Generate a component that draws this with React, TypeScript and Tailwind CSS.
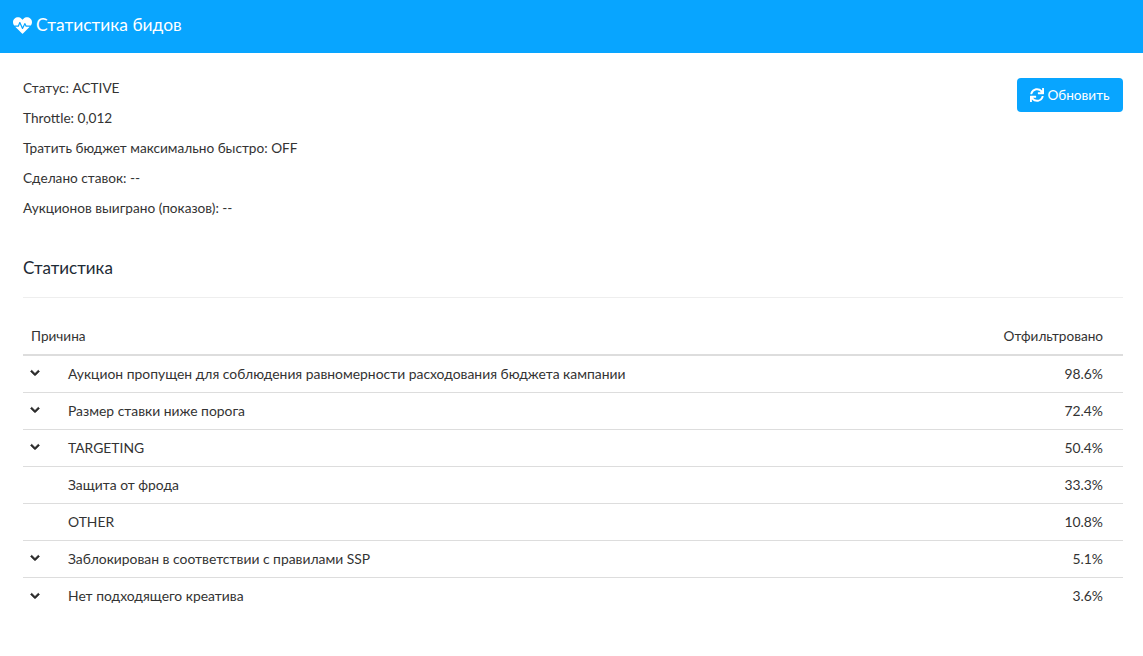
import { FaHeartbeat, FaSync, FaChevronDown } from "react-icons/fa";

const rows: [string, string, boolean][] = [
  ["Аукцион пропущен для соблюдения равномерности расходования бюджета кампании", "98.6%", true],
  ["Размер ставки ниже порога", "72.4%", true],
  ["TARGETING", "50.4%", true],
  ["Защита от фрода", "33.3%", false],
  ["OTHER", "10.8%", false],
  ["Заблокирован в соответствии с правилами SSP", "5.1%", true],
  ["Нет подходящего креатива", "3.6%", true],
];
const info = ["Статус: ACTIVE", "Throttle: 0,012", "Тратить бюджет максимально быстро: OFF", "Сделано ставок: --", "Аукционов выиграно (показов): --"];

export default function App() {
  return (
    <div className="min-h-[656px] bg-white font-['Lato','Noto_Sans',sans-serif] text-[13.88px] text-[#333333]">
      <header className="flex h-[53px] items-center gap-[4px] bg-[#08a5ff] pl-[13px] text-[17.4px] text-white">
        <FaHeartbeat className="h-[19px] w-[19px] -translate-y-[1px]" />
        <span className="-translate-y-[1px]">Статистика бидов</span>
      </header>
      <main className="pl-[23px] pr-[20px] pt-[20px]">
        <div className="flex items-start justify-between">
          <div className="flex flex-col text-[13.65px]">
            {info.map((t) => (
              <div key={t} className="flex h-[30px] items-center">{t}</div>
            ))}
          </div>
          <button className="mt-[5px] flex h-[34px] w-[106px] items-center justify-center gap-[3px] rounded-[4px] bg-[#08a5ff] text-[13.6px] text-white">
            <FaSync className="h-[14px] w-[14px]" />
            Обновить
          </button>
        </div>
        <h2 className="mt-[30px] text-[17px] leading-[30px] text-[#1d2b36]">Статистика</h2>
        <div className="mt-[14px] h-px bg-[#eeeeee]" />
        <div className="mt-[21px] flex h-[37px] items-center justify-between border-b-2 border-[#dddddd] pl-[8px] pr-[20px]">
          <span className="text-[13.6px]">Причина</span>
          <span className="text-[13.6px]">Отфильтровано</span>
        </div>
        {rows.map(([name, pct, chevron]) => (
          <div key={name} className="flex h-[37px] items-center border-b border-[#dddddd] pr-[20px] last:border-b-0">
            <div className="flex w-[45px] justify-start pl-[7px]">
              {chevron && <FaChevronDown className="h-[10px] w-[10px] -translate-y-[1px] stroke-[40px] text-[#2b2b2b]" />}
            </div>
            <div className="flex-1">{name}</div>
            <div>{pct}</div>
          </div>
        ))}
      </main>
    </div>
  );
}
